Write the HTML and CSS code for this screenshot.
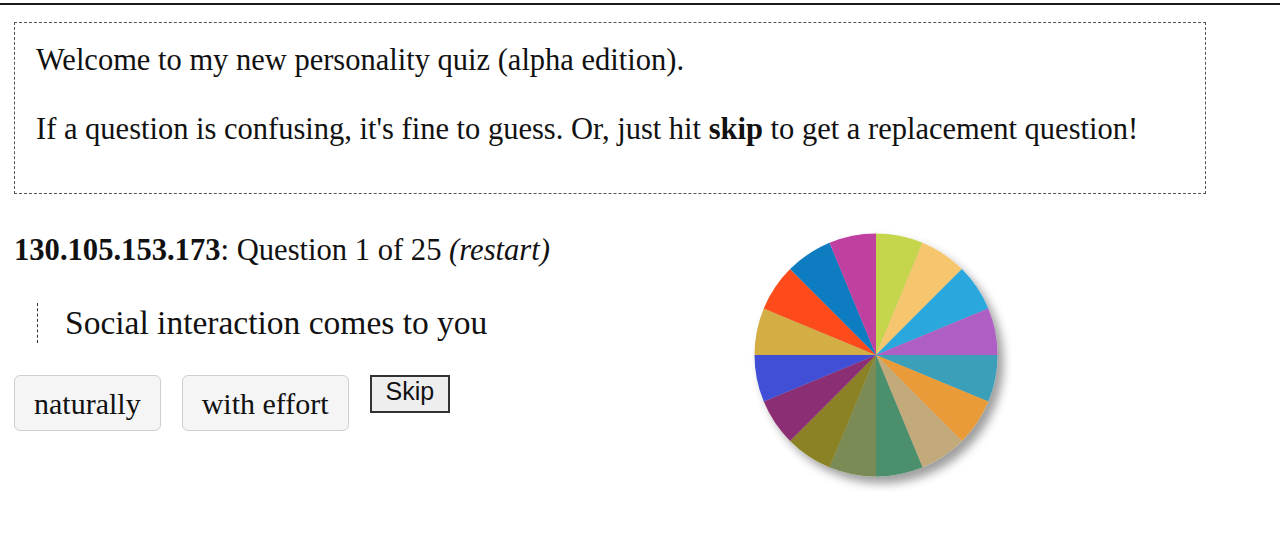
FILE: index.html
```html
<!DOCTYPE html>
<html>
<head>
<meta charset="utf-8">
<link rel="stylesheet" href="styles.css">
</head>
<body>
<div class="frame">
  <div class="intro">
    <p>Welcome to my new personality quiz (alpha edition).</p>
    <p>If a question is confusing, it's fine to guess. Or, just hit <b>skip</b> to get a replacement question!</p>
  </div>
  <div class="main">
    <div class="quiz">
      <div class="status"><b>130.105.153.173</b>: Question 1 of 25 <i>(restart)</i></div>
      <div class="question">Social interaction comes to you</div>
      <div class="answers">
        <button class="answer">naturally</button>
        <button class="answer">with effort</button>
        <button class="skip">Skip</button>
      </div>
    </div>
    <svg class="pie" width="262" height="262" viewBox="0 0 262 262">
      <defs>
        <filter id="sh" x="-10%" y="-10%" width="130%" height="130%">
          <feDropShadow dx="6" dy="7" stdDeviation="5" flood-color="#000" flood-opacity="0.38"/>
        </filter>
      </defs>
      <g filter="url(#sh)">
        <path fill="#c5d64e" d="M125 125 L125 3.5 A121.5 121.5 0 0 1 171.5 12.75 Z"/>
        <path fill="#f6c66e" d="M125 125 L171.5 12.75 A121.5 121.5 0 0 1 210.91 39.09 Z"/>
        <path fill="#2aa8dd" d="M125 125 L210.91 39.09 A121.5 121.5 0 0 1 237.25 78.5 Z"/>
        <path fill="#ae5fc4" d="M125 125 L237.25 78.5 A121.5 121.5 0 0 1 246.5 125 Z"/>
        <path fill="#3a9fba" d="M125 125 L246.5 125 A121.5 121.5 0 0 1 237.25 171.5 Z"/>
        <path fill="#e99b38" d="M125 125 L237.25 171.5 A121.5 121.5 0 0 1 210.91 210.91 Z"/>
        <path fill="#c2aa7a" d="M125 125 L210.91 210.91 A121.5 121.5 0 0 1 171.5 237.25 Z"/>
        <path fill="#4b8f6c" d="M125 125 L171.5 237.25 A121.5 121.5 0 0 1 125 246.5 Z"/>
        <path fill="#7a8b56" d="M125 125 L125 246.5 A121.5 121.5 0 0 1 78.5 237.25 Z"/>
        <path fill="#8b8225" d="M125 125 L78.5 237.25 A121.5 121.5 0 0 1 39.09 210.91 Z"/>
        <path fill="#8c2f73" d="M125 125 L39.09 210.91 A121.5 121.5 0 0 1 12.75 171.5 Z"/>
        <path fill="#4150d6" d="M125 125 L12.75 171.5 A121.5 121.5 0 0 1 3.5 125 Z"/>
        <path fill="#d2ae45" d="M125 125 L3.5 125 A121.5 121.5 0 0 1 12.75 78.5 Z"/>
        <path fill="#fd4b1c" d="M125 125 L12.75 78.5 A121.5 121.5 0 0 1 39.09 39.09 Z"/>
        <path fill="#0d7bc0" d="M125 125 L39.09 39.09 A121.5 121.5 0 0 1 78.5 12.75 Z"/>
        <path fill="#c0409f" d="M125 125 L78.5 12.75 A121.5 121.5 0 0 1 125 3.5 Z"/>
      </g>
    </svg>
  </div>
</div>
</body>
</html>
```

FILE: styles.css
```css
html, body {
  margin: 0;
  padding: 0;
  background: #fff;
}
body {
  font-family: "Liberation Serif", "Times New Roman", serif;
  color: #111;
  font-size: 30.5px;
}
.frame {
  margin-top: 3px;
  border-top: 2px solid #1a1a1a;
  padding: 17px 74px 0 14px;
  height: 550px;
  box-sizing: border-box;
}
.intro {
  border: 1px dashed #555;
  padding: 20px 21px 0 21px;
  height: 172px;
  box-sizing: border-box;
}
.intro p {
  margin: 0 0 35px 0;
  line-height: 34px;
}
.intro p:last-child {
  margin-bottom: 0;
}
.main {
  display: flex;
  align-items: flex-start;
}
.quiz {
  width: 737px;
  padding-top: 38px;
}
.status {
  font-size: 30.6px;
  line-height: 36px;
}
.question {
  margin: 35px 0 0 23px;
  padding-left: 27px;
  border-left: 1px dashed #333;
  font-size: 33.5px;
  line-height: 40px;
}
.answers {
  display: flex;
  align-items: flex-start;
  gap: 21px;
  margin-top: 32px;
}
.answer {
  font-family: "Liberation Serif", "Times New Roman", serif;
  font-size: 30px;
  color: #111;
  background: #f5f5f5;
  border: 1px solid #cfcfcf;
  border-radius: 6px;
  height: 56px;
  padding: 2px 19px 0;
}
.skip {
  font-family: "Liberation Sans", Arial, sans-serif;
  font-size: 25px;
  line-height: 28px;
  color: #111;
  background: #eeeeee;
  border: 2px solid #333;
  border-radius: 0;
  height: 38px;
  padding: 0 14px 6px;
}
.pie {
  margin-top: 36px;
  display: block;
}
```
